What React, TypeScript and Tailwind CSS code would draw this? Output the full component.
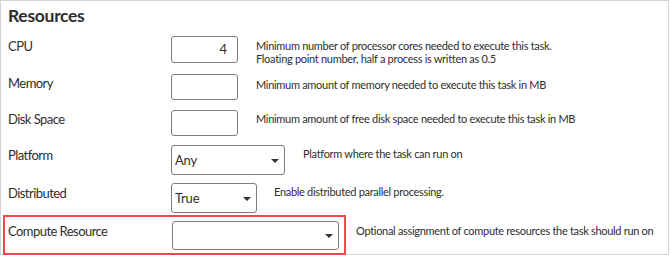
import React from 'react';

const font = { fontFamily: 'Lato, "Noto Sans", sans-serif' };

const Caret = () => (
  <svg width="8" height="4" viewBox="0 0 8 4" className="shrink-0">
    <path d="M0 0 L8 0 L4 4 Z" fill="#333" />
  </svg>
);

interface SelectBoxProps {
  value: string;
  className: string;
}

const SelectBox: React.FC<SelectBoxProps> = ({ value, className }) => (
  <div
    className={`flex items-center justify-between pl-[3px] pr-[5px] pt-[1px] border border-[#7c7c7c] rounded-[3px] bg-white text-[13px] tracking-[-0.2px] text-[#2e2e2e] shrink-0 ${className}`}
  >
    <span>{value}</span>
    <Caret />
  </div>
);

export default function App() {
  const label = 'shrink-0 text-[13px] tracking-[-0.55px] leading-[18px] text-[#2e2e2e]';
  const desc = 'text-[11px] tracking-[-0.3px] leading-[12.5px] text-[#2e2e2e] whitespace-nowrap';

  return (
    <div className="w-[671px] h-[257px] bg-white" style={font}>
      <div className="w-[669px] h-[255px] border border-[#d4d4d4] bg-white">
        {/* Header */}
        <h2 className="pl-[7px] pt-[3px] text-[17.5px] font-bold tracking-[-0.3px] leading-[24px] text-[#2e2e2e]">
          Resources
        </h2>

        {/* CPU */}
        <div className="flex items-start mt-[8px]">
          <div className={`w-[170px] pl-[7px] pt-[1px] ${label}`}>CPU</div>
          <div className="w-[67px] h-[27px] shrink-0 border border-[#7c7c7c] rounded-[3px] flex items-center justify-end pr-[10px] text-[13px] text-[#2e2e2e]">
            4
          </div>
          <div className={`ml-[18px] pt-[4px] ${desc}`}>
            Minimum number of processor cores needed to execute this task.
            <br />
            Floating point number, half a process is written as 0.5
          </div>
        </div>

        {/* Memory */}
        <div className="flex items-start mt-[9px]">
          <div className={`w-[170px] pl-[7px] pt-[0px] ${label}`}>Memory</div>
          <div className="w-[67px] h-[26px] shrink-0 border border-[#7c7c7c] rounded-[3px]" />
          <div className={`ml-[18px] pt-[5px] ${desc}`}>
            Minimum amount of memory needed to execute this task in MB
          </div>
        </div>

        {/* Disk Space */}
        <div className="flex items-start mt-[10px]">
          <div className={`w-[170px] pl-[7px] pt-[0px] ${label}`}>Disk Space</div>
          <div className="w-[67px] h-[26px] shrink-0 border border-[#7c7c7c] rounded-[3px]" />
          <div className={`ml-[18px] pt-[3px] ${desc}`}>
            Minimum amount of free disk space needed to execute this task in MB
          </div>
        </div>

        {/* Platform */}
        <div className="flex items-start mt-[9px]">
          <div className={`w-[170px] pl-[7px] pt-[1px] ${label}`}>Platform</div>
          <SelectBox value="Any" className="w-[114px] h-[30px]" />
          <div className={`ml-[18px] pt-[3px] ${desc}`}>Platform where the task can run on</div>
        </div>

        {/* Distributed */}
        <div className="flex items-start mt-[8px]">
          <div className={`w-[170px] pl-[7px] pt-[1px] ${label}`}>Distributed</div>
          <SelectBox value="True" className="w-[86px] h-[30px]" />
          <div className={`ml-[17px] pt-[3px] ${desc}`}>Enable distributed parallel processing.</div>
        </div>

        {/* Compute Resource, highlighted */}
        <div className="flex items-start mt-[2px]">
          <div className="ml-[2px] w-[343px] h-[40px] shrink-0 flex items-start border-2 border-[#f04848] pl-[3px] pt-[4px]">
            <div className={`w-[164px] pt-[1px] ${label}`}>Compute Resource</div>
            <SelectBox value="" className="w-[167px] h-[29px]" />
          </div>
          <div className={`ml-[10px] pt-[10px] ${desc}`}>
            Optional assignment of compute resources the task should run on
          </div>
        </div>
      </div>
    </div>
  );
}
